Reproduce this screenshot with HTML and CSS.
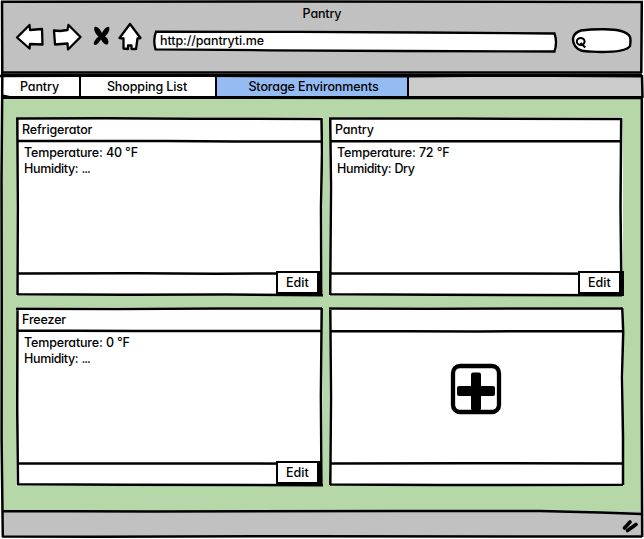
FILE: index.html
```html
<!DOCTYPE html>
<html lang="en">
<head>
<meta charset="utf-8">
<title>Pantry</title>
<link rel="stylesheet" href="styles.css">
</head>
<body>
<div class="window">
  <header class="chrome">
    <div class="title">Pantry</div>
    <div class="toolbar">
      <svg class="nav" width="136" height="36" viewBox="14 20 136 36">
        <g fill="#fff" stroke="#000" stroke-width="2.3" stroke-linejoin="round">
          <path d="M17 37.500L29.500 25L30 30L42 29L42.500 44.500L30 44L29.500 48.500Z"/>
          <path d="M54 30.500L60 31L67.500 30L68.500 25L80.500 37L68 49.500L67.500 43.500L55 44.500Z"/>
          <path d="M130 24L140.500 38L137.500 38.500L136 49L131.500 49L131.500 45.500L128 45.500L128 49L123.500 48.500L123.500 38.500L119.500 38Z"/>
        </g>
        <path d="M94.500 27C97 25.500 100 29 102 33C104 29 107 26 109 27C110.500 29 108 34 105 36.500C108 38 109.500 42 107.500 44.500C104 45 102 41 101 39.500C99 42 97 45.500 94.500 45C92.500 43 95.500 39 98.500 36.500C95.500 34 93.500 30 94.500 27Z"/>
      </svg>
      <div class="address">
        <svg class="sketch" width="406" height="24" viewBox="152 29 406 24"><path d="M156 31.700L300 31.900L420 32.500L554.500 33.500Q557.500 42 554.500 51.500L400 51L270 50.300L155.500 49.400Q152.800 40 156 31.700Z" fill="#fff" stroke="#000" stroke-width="2.300"/></svg>
        <span class="url">http://pantryti.me</span>
      </div>
      <svg class="search" width="62" height="28" viewBox="571 28 62 28">
        <path d="M581 30.500C596 28.500 614 29 621 31C632 34 631 39 630 46C627 51 613 52 601 52C587 51 580 53 575 46C571 39 573 33 581 30.500Z" fill="#fff" stroke="#000" stroke-width="2.400"/>
        <path d="M584.600 41.500a3.900 3.400 0 1 0 -7.800 0a3.900 3.400 0 1 0 7.800 0M580.500 43L585.300 47.500" fill="none" stroke="#000" stroke-width="2"/>
      </svg>
    </div>
  </header>
  <nav class="tabs">
    <div class="tab tab-pantry">Pantry</div>
    <div class="tab tab-shopping">Shopping List</div>
    <div class="tab tab-storage">Storage Environments</div>
    <div class="tab-rest"></div>
  </nav>
  <main class="content">
    <section class="card">
      <h2>Refrigerator</h2>
      <div class="body"><p>Temperature: 40 °F</p><p>Humidity: <span class="dots">...</span></p></div>
      <svg class="sketch" width="307" height="180" viewBox="0 0 307 180"><path d="M0 1.500L90 1.300L180 1.700L306 2M1.300 1L1.800 90L1.500 178M1 23.700L150 24L220 24.500L306 24.300M305.500 1L306 35L305 90L305.300 178M1 156.500L120 156.200L200 156.800L306 156.300M1 177.200L110 177.700L210 177.600L307 178.300"/></svg>
      <button>Edit</button>
    </section>
    <section class="card">
      <h2>Pantry</h2>
      <div class="body"><p>Temperature: 72 °F</p><p>Humidity: Dry</p></div>
      <svg class="sketch" width="294" height="180" viewBox="0 0 294 180"><path d="M0 1.500L130 1.600L293 2M1.200 1L2 70L1.200 178M1 23.900L150 24.300L293 24.300M292.200 1L291.500 90L292.500 178M1 156.300L140 156.400L293 156.800M1 177.300L110 177.700L293 178.200"/></svg>
      <button>Edit</button>
    </section>
    <section class="card">
      <h2>Freezer</h2>
      <div class="body"><p>Temperature: 0 °F</p><p>Humidity: <span class="dots">...</span></p></div>
      <svg class="sketch" width="307" height="180" viewBox="0 0 307 180"><path d="M0 1.700L100 2L200 1.500L306 1.500M1.500 1L1.200 100L2 178M1 23.600L120 23.900L306 24M305.700 1L304.900 90L305.500 178M1 156.300L130 156.400L306 156.700M1 177.200L110 177.700L307 178.200"/></svg>
      <button>Edit</button>
    </section>
    <section class="card card-new">
      <h2></h2>
      <div class="body"></div>
      <svg class="sketch" width="296" height="180" viewBox="0 0 296 180"><path d="M0 1.500L100 1.700L294 1.500M1.300 1L2 90L1.300 178M1 24L150 24.400L294 24.200M293.300 1L294.200 25L293 70L294 130L294 178M1 156.400L140 156.200L294 156.600M1 177.500L110 178L294 177.700"/></svg>
      <svg class="plus" width="52" height="52" viewBox="0 0 52 52"><rect x="3" y="3" width="46" height="46" rx="7" fill="#fff" stroke="#000" stroke-width="4.300"/><rect x="21" y="9.500" width="10" height="38" rx="2"/><rect x="7" y="23" width="38" height="10" rx="2"/></svg>
    </section>
  </main>
  <footer class="status">
    <svg width="18" height="16" viewBox="621 517 18 16"><path d="M624.500 528L630 522M627.500 530.500L636 524.500" stroke="#000" stroke-width="3.600" stroke-linecap="round"/></svg>
  </footer>
  <svg class="sketch frame" width="644" height="539" viewBox="0 0 644 539"><path d="M1 1.700L300 1.500L643 2M2 1L2.300 80L1.500 180L1.700 300L1.600 440L2.800 537M1 72.400L300 72.600L642 72.500M0 76L150 75.600L410 76.300L500 75.500L642 76.300L642.500 98M3 95.800L12 97.700L130 97.700L410 98L642 98M641.800 1L641.300 73M641.800 98L641.800 300L641.600 400L642.200 537M2 511L150 511.500L400 511L540 511L600 512.500L642 514M2 536.500L100 536.700L300 536.200L642 536.500"/></svg>
</div>
</body>
</html>
```

FILE: styles.css
```css
* { box-sizing: border-box; }
body {
  margin: 0;
  background: #fff;
  color: #000;
  font: 450 12.5px/16px Inter, "Open Sans", sans-serif;
  font-feature-settings: "cv11" 1, "ss03" 1;
  overflow: hidden;
}
h2, p { margin: 0; font: inherit; }
.window {
  position: relative;
  width: 644px;
  height: 539px;
  padding: 1px 2px 2px;
  display: flex;
  flex-direction: column;
}
.sketch {
  position: absolute;
  left: 0;
  top: 0;
  fill: none;
  stroke: #000;
  stroke-width: 2.5;
  pointer-events: none;
}
.chrome { height: 73px; background: #c1c1c1; padding-top: 5px; }
.title { text-align: center; height: 14px; line-height: 16px; letter-spacing: -.15px; }
.toolbar { display: flex; align-items: flex-start; padding-left: 12px; }
.nav { display: block; }
.address { position: relative; width: 406px; height: 24px; margin: 9px 0 0 2px; }
.url { position: relative; display: block; padding: 4px 0 0 8px; letter-spacing: -.1px; }
.search { display: block; margin: 8px 0 0 13px; }
.tabs { display: flex; height: 25px; background: #000; padding: 3px 0 3px; letter-spacing: -.1px; }
.tab { background: #fff; text-align: center; line-height: 19px; border-right: 2px solid #000; }
.tab-pantry { width: 79px; padding-right: 2px; }
.tab-shopping { width: 136px; padding-right: 2px; }
.tab-storage { width: 192px; background: #94bbf2; padding-left: 3px; }
.tab-rest { flex: 1; background: #ccc; }
.content {
  height: 412px;
  background: #b6d7a8;
  padding: 18px 0 0 14px;
  display: grid;
  grid-template-columns: 307px 294px;
  grid-template-rows: 179px 179px;
  column-gap: 6px;
  row-gap: 11px;
}
.card { position: relative; background: #fff; display: flex; flex-direction: column; }
.card-new { width: 295px; }
.card h2 { height: 24px; padding: 5px 0 0 6px; letter-spacing: -.15px; }
.body { flex: 1; padding: 4px 0 0 8px; letter-spacing: -.16px; word-spacing: .1px; }
.body p + p { letter-spacing: -.35px; }
.body .dots { letter-spacing: -1px; }
.card button {
  position: absolute;
  right: 1px;
  bottom: 0;
  width: 46px;
  height: 25px;
  padding: 1px 0 0 8px;
  border: solid #000;
  border-width: 2px 5px 4px 2px;
  background: #fff;
  color: #000;
  font: inherit;
  font-feature-settings: inherit;
  text-align: left;
}
.card:nth-child(2) button { right: -1px; }
.plus { position: absolute; left: 121px; top: 56px; }
.status { height: 25px; background: #c1c1c1; display: flex; justify-content: flex-end; padding: 6px 3px 0 0; }
```
